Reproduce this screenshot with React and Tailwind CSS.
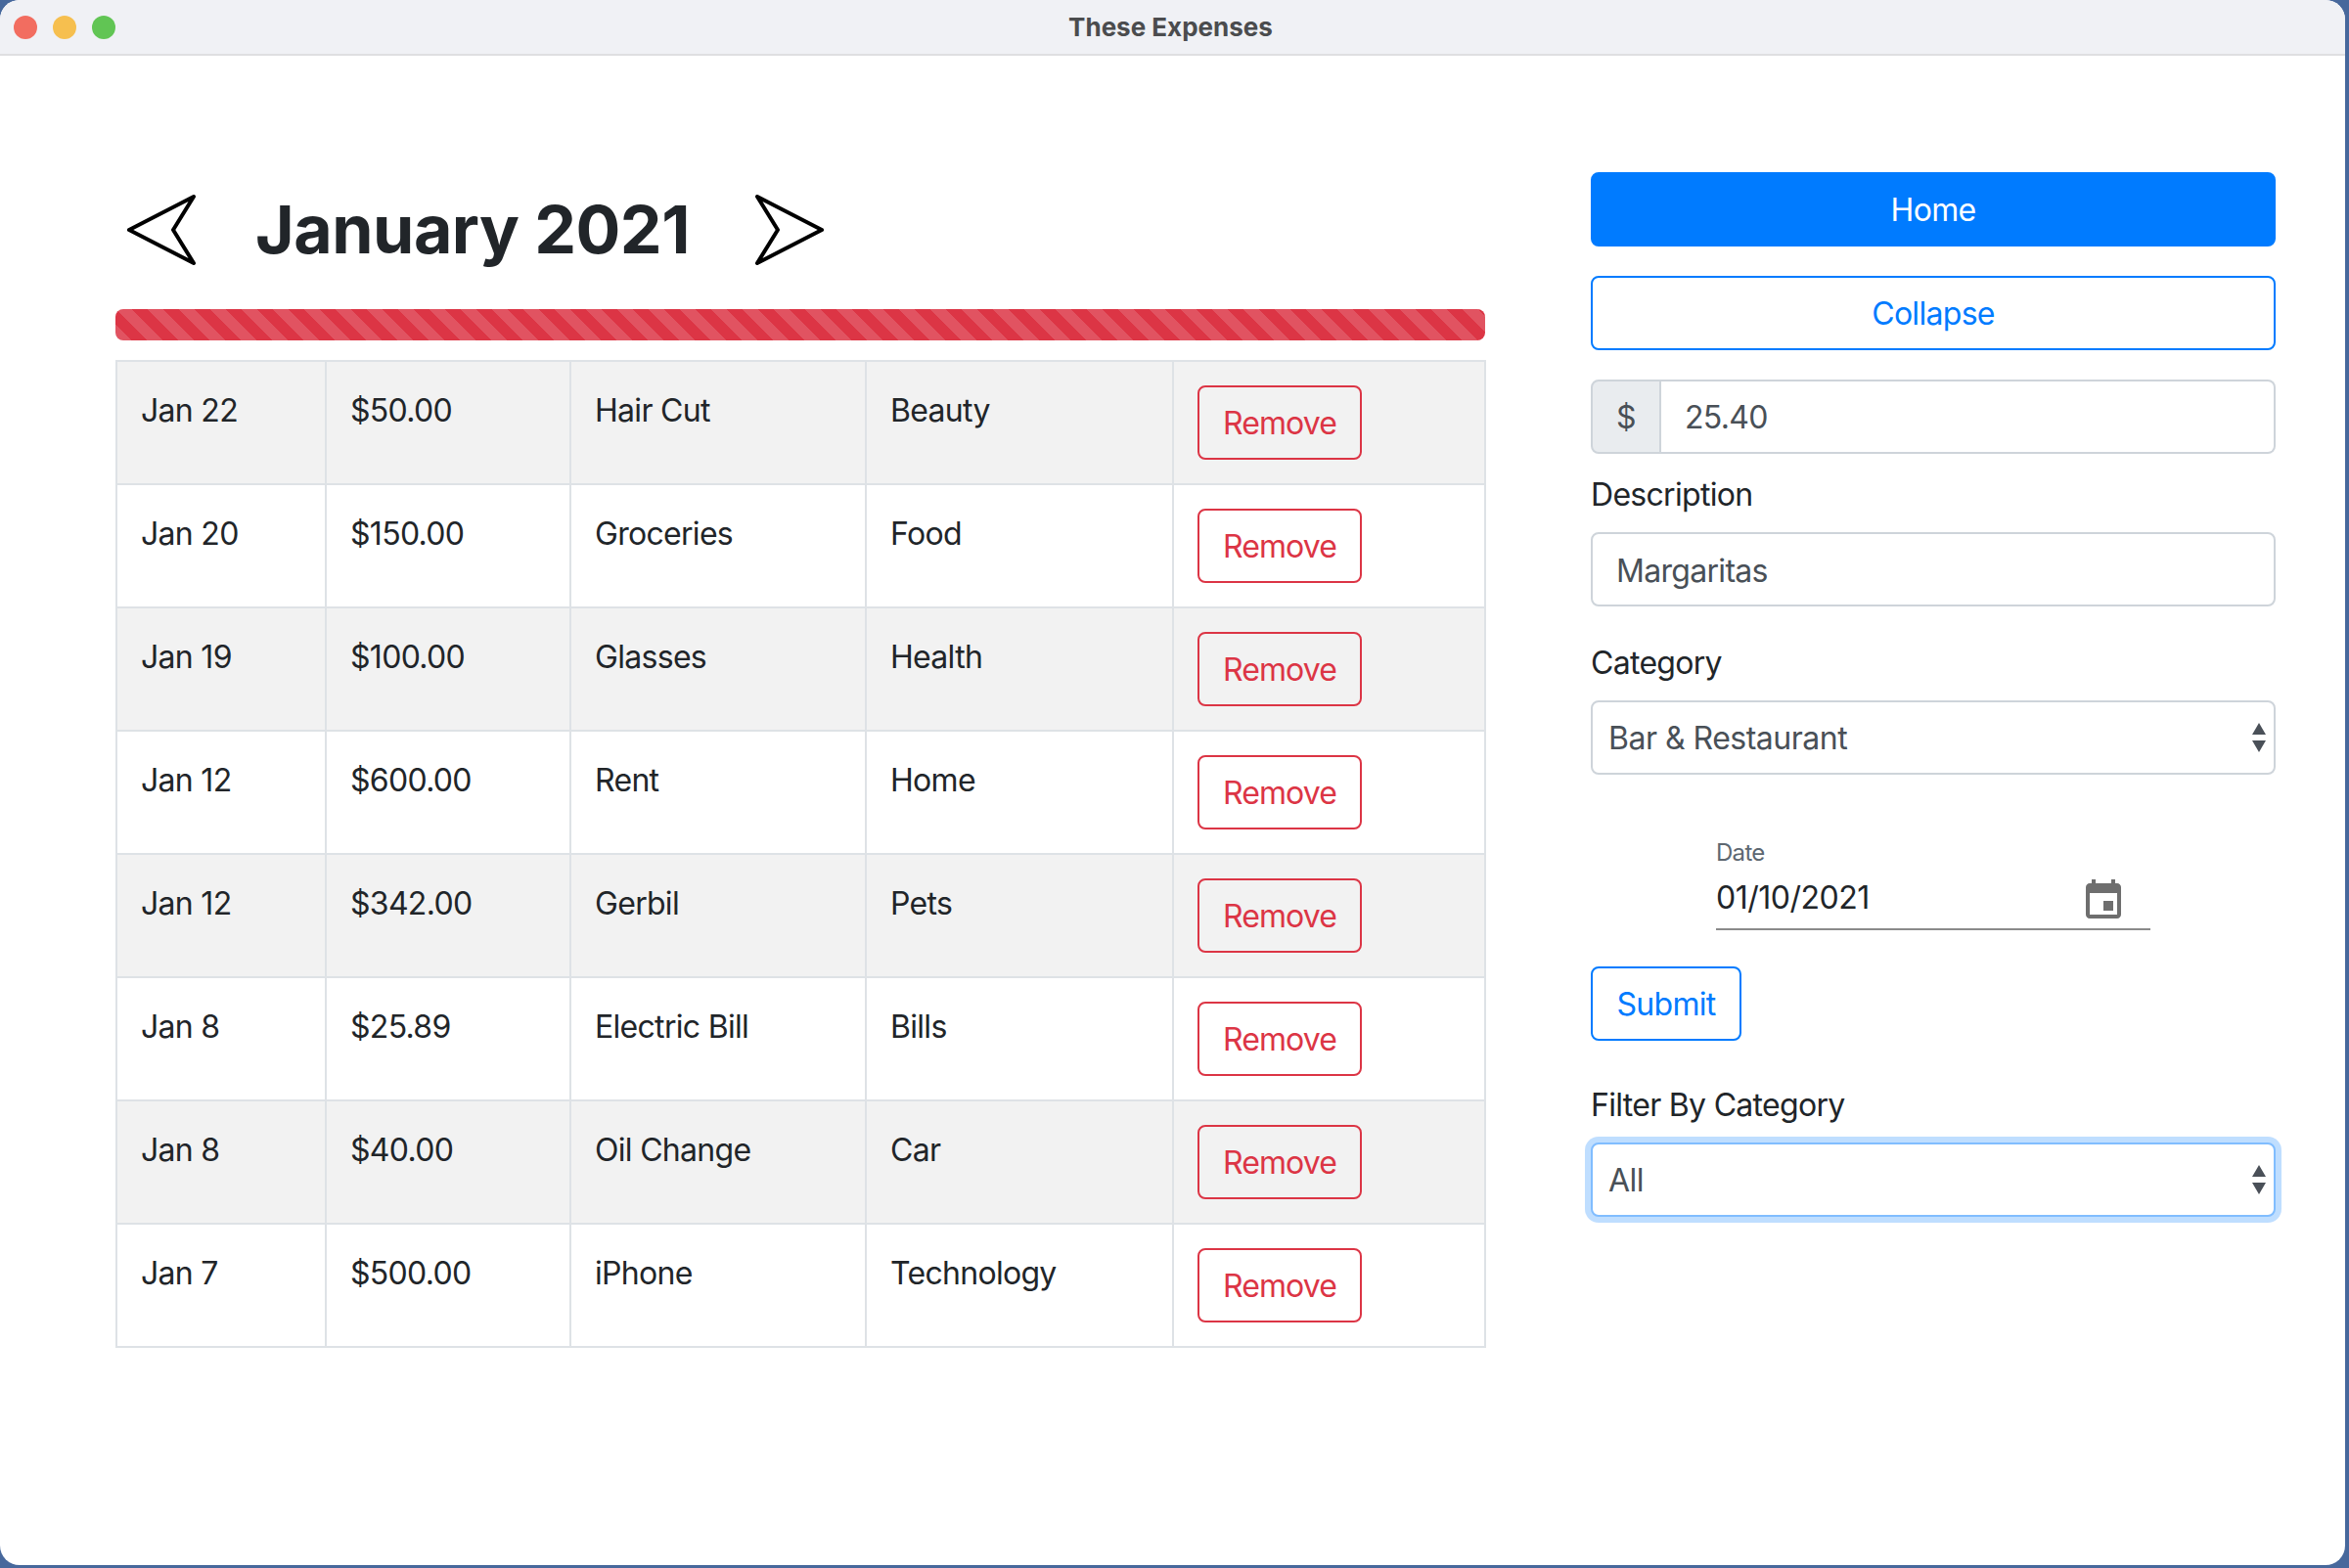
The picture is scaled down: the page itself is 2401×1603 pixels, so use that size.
const rows = [
  ['Jan 22', '$50.00', 'Hair Cut', 'Beauty'],
  ['Jan 20', '$150.00', 'Groceries', 'Food'],
  ['Jan 19', '$100.00', 'Glasses', 'Health'],
  ['Jan 12', '$600.00', 'Rent', 'Home'],
  ['Jan 12', '$342.00', 'Gerbil', 'Pets'],
  ['Jan 8', '$25.89', 'Electric Bill', 'Bills'],
  ['Jan 8', '$40.00', 'Oil Change', 'Car'],
  ['Jan 7', '$500.00', 'iPhone', 'Technology'],
]

function Arrow({ flip }) {
  return (
    <svg width="72" height="74" viewBox="0 0 72 74" className={flip ? '-scale-x-100 shrink-0' : 'shrink-0'}>
      <path d="M3 37 L69 3 L48 37 L69 71 Z" fill="none" stroke="#000" strokeWidth="4" strokeLinejoin="round" />
    </svg>
  )
}

function SelectBox({ value, focused }) {
  return (
    <div className="relative">
      <select
        defaultValue={value}
        className={`block w-full h-[76px] pl-[16px] pr-[48px] pt-[2px] appearance-none bg-white rounded-lg border-2 text-[32px] tracking-[-0.5px] text-[#495057] ${
          focused ? 'border-[#80bdff] shadow-[0_0_0_6px_rgba(0,123,255,0.25)]' : 'border-[#ced4da]'
        }`}
      >
        <option>{value}</option>
      </select>
      <svg width="16" height="30" viewBox="0 0 16 30" className="absolute right-[9px] top-[23px] pointer-events-none">
        <path d="M8 0 L15 12 H1 Z M1 18 H15 L8 30 Z" fill="#4a5058" />
      </svg>
    </div>
  )
}

export default function App() {
  return (
    <div className="h-[1603px] w-[2401px] overflow-hidden bg-[#47689c] font-['Inter',sans-serif] text-[#212529]">
      <div className="w-[2397px] h-[1600px] bg-white rounded-[20px] overflow-hidden">
        <div className="h-[57px] bg-[#f0f1f5] border-b-2 border-[#dfdfe1] relative flex items-center justify-center">
          <div className="absolute left-[14px] top-[16px] flex gap-[16px]">
            <div className="w-[24px] h-[24px] rounded-full bg-[#f26d60]" />
            <div className="w-[24px] h-[24px] rounded-full bg-[#f6bf4f]" />
            <div className="w-[24px] h-[24px] rounded-full bg-[#61c554]" />
          </div>
          <span className="text-[26px] font-bold text-[#4b4c4e] pr-[4px] pb-[1px]">These Expenses</span>
        </div>

        <div className="flex pl-[118px] pt-[119px]">
          <div className="w-[1400px]">
            <div className="h-[118px] pl-[11px] flex items-center">
              <Arrow />
              <h1 className="ml-[60px] w-[510px] text-[68px] font-bold leading-none tracking-[-0.5px] pb-[2px]">January 2021</h1>
              <Arrow flip />
            </div>
            <div className="mt-[22px] h-[32px] rounded-lg bg-[#dc3545] bg-[linear-gradient(45deg,rgba(255,255,255,0.15)_25%,transparent_25%,transparent_50%,rgba(255,255,255,0.15)_50%,rgba(255,255,255,0.15)_75%,transparent_75%,transparent)] bg-[length:32px_32px]" />
            <table className="mt-[20px] w-[1399px] table-fixed border-collapse text-[32px] leading-[48px] tracking-[-0.7px]">
              <colgroup>
                <col className="w-[214px]" />
                <col className="w-[250px]" />
                <col className="w-[302px]" />
                <col className="w-[314px]" />
                <col className="w-[319px]" />
              </colgroup>
              <tbody>
                {rows.map((r, i) => (
                  <tr key={i} className={i % 2 === 0 ? 'bg-[#f2f2f2]' : ''}>
                    {r.map((c, j) => (
                      <td key={j} className="border-2 border-[#dee2e6] px-[24px] pt-[26px] pb-[22px] align-top">{c}</td>
                    ))}
                    <td className="border-2 border-[#dee2e6] p-[24px] align-top">
                      <button className="block h-[76px] w-[168px] pt-[2px] rounded-lg border-2 border-[#dc3545] text-[#dc3545] text-[32px] tracking-[-0.9px]">Remove</button>
                    </td>
                  </tr>
                ))}
              </tbody>
            </table>
          </div>

          <div className="ml-[108px] w-[700px] text-[32px] tracking-[-0.7px]">
            <button className="block w-full h-[76px] pt-[2px] rounded-lg bg-[#007bff] border-2 border-[#007bff] text-white">Home</button>
            <button className="block w-full h-[76px] pt-[2px] mt-[30px] rounded-lg border-2 border-[#007bff] text-[#007bff]">Collapse</button>

            <div className="mt-[30px] flex h-[76px]">
              <div className="w-[72px] pt-[2px] flex items-center justify-center bg-[#e9ecef] border-2 border-[#ced4da] rounded-l-lg text-[#495057]">$</div>
              <input defaultValue="25.40" className="flex-1 min-w-0 pl-[24px] pt-[2px] border-2 border-l-0 border-[#ced4da] rounded-r-lg text-[#495057]" />
            </div>

            <div className="mt-[18px] mb-[14px] leading-[48px]">Description</div>
            <input defaultValue="Margaritas" className="block w-full h-[76px] pl-[24px] pt-[2px] border-2 border-[#ced4da] rounded-lg text-[#495057]" />

            <div className="mt-[34px] mb-[14px] leading-[48px]">Category</div>
            <SelectBox value="Bar &amp; Restaurant" />

            <div className="mx-auto mt-[64px] w-[444px]">
              <div className="text-[24px] leading-[32px] text-[#5d6771]">Date</div>
              <div className="mt-[4px] h-[59px] border-b-2 border-[#8a8a8a] flex items-center justify-between">
                <span className="mb-[5px] tracking-[-0.5px]">01/10/2021</span>
                <svg width="48" height="48" viewBox="0 0 24 24" fill="#6e6e6e" className="mr-[24px] mt-[1px]">
                  <path d="M17 12h-5v5h5v-5zM16 1v2H8V1H6v2H5c-1.11 0-1.99.9-1.99 2L3 19c0 1.1.89 2 2 2h14c1.1 0 2-.9 2-2V5c0-1.1-.9-2-2-2h-1V1h-2zm3 18H5V8h14v11z" />
                </svg>
              </div>
            </div>

            <button className="block mt-[37px] w-[154px] h-[76px] pt-[2px] rounded-lg border-2 border-[#007bff] text-[#007bff]">Submit</button>

            <div className="mt-[42px] mb-[14px] leading-[48px]">Filter By Category</div>
            <SelectBox value="All" focused />
          </div>
        </div>
      </div>
    </div>
  )
}
